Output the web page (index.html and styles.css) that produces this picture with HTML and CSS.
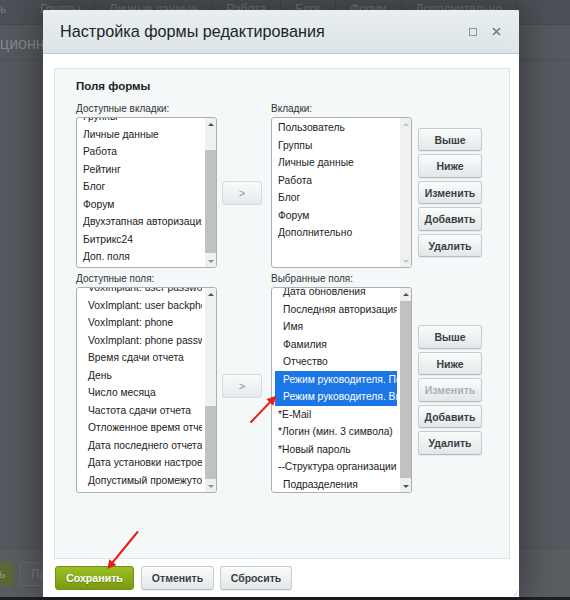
FILE: index.html
```html
<!DOCTYPE html>
<html lang="ru">
<head>
<meta charset="utf-8">
<title>Настройка формы редактирования</title>
<link rel="stylesheet" href="styles.css">
</head>
<body>
<div class="page">
  <div class="tabs">
    <span class="tab tab-first">ь</span>
    <span class="tab">Группы</span>
    <span class="tab">Личные данные</span>
    <span class="tab">Работа</span>
    <span class="tab">Блог</span>
    <span class="tab">Форум</span>
    <span class="tab">Дополнительно</span>
  </div>
  <div class="page-title">ционные данные</div>
  <div class="page-content"></div>
  <div class="page-footer">
    <span class="bg-btn bg-btn-green">ь</span>
    <span class="bg-btn bg-btn-gray">Применить</span>
  </div>
  <div class="page-bottom"></div>
</div>

<div class="dialog">
  <div class="dlg-head">
    <span class="dlg-title">Настройка формы редактирования</span>
    <span class="dlg-icons">
      <svg class="ico" width="8" height="8" viewBox="0 0 8 8"><rect x="0.5" y="0.5" width="7" height="7" fill="none" stroke="#8a96a0" stroke-width="1"/></svg>
      <svg class="ico" width="9" height="9" viewBox="0 0 9 9"><path d="M1 1L8 8M8 1L1 8" stroke="#6f7c86" stroke-width="1.6"/></svg>
    </span>
  </div>
  <div class="dlg-body">
    <div class="panel">
      <div class="panel-title">Поля формы</div>
      <div class="fields">
        <div class="lbl c1">Доступные вкладки:</div>
        <div class="lbl c3">Вкладки:</div>

        <div class="listbox lb-small c1">
          <div class="opts"><div class="opts-in off-1">
            <div class="opt">Группы</div>
            <div class="opt">Личные данные</div>
            <div class="opt">Работа</div>
            <div class="opt">Рейтинг</div>
            <div class="opt">Блог</div>
            <div class="opt">Форум</div>
            <div class="opt">Двухэтапная авторизация</div>
            <div class="opt">Битрикс24</div>
            <div class="opt">Доп. поля</div>
          </div></div>
          <div class="sb">
            <span class="sb-btn"><i class="ar-up"></i></span>
            <span class="sb-track"><span class="thumb th-1"></span></span>
            <span class="sb-btn"><i class="ar-down light"></i></span>
          </div>
        </div>
        <button class="move">&gt;</button>
        <div class="listbox lb-small">
          <div class="opts"><div class="opts-in off-2">
            <div class="opt">Пользователь</div>
            <div class="opt">Группы</div>
            <div class="opt">Личные данные</div>
            <div class="opt">Работа</div>
            <div class="opt">Блог</div>
            <div class="opt">Форум</div>
            <div class="opt">Дополнительно</div>
          </div></div>
          <div class="sb">
            <span class="sb-btn"><i class="ar-up faint"></i></span>
            <span class="sb-track"></span>
            <span class="sb-btn"><i class="ar-down faint"></i></span>
          </div>
        </div>
        <div class="side">
          <button class="btn">Выше</button>
          <button class="btn">Ниже</button>
          <button class="btn">Изменить</button>
          <button class="btn">Добавить</button>
          <button class="btn">Удалить</button>
        </div>

        <div class="lbl c1 lbl-second">Доступные поля:</div>
        <div class="lbl c3 lbl-second">Выбранные поля:</div>

        <div class="listbox lb-big c1">
          <div class="opts"><div class="opts-in off-3">
            <div class="opt sub">VoxImplant: user password</div>
            <div class="opt sub">VoxImplant: user backphone</div>
            <div class="opt sub">VoxImplant: phone</div>
            <div class="opt sub">VoxImplant: phone password</div>
            <div class="opt sub">Время сдачи отчета</div>
            <div class="opt sub">День</div>
            <div class="opt sub">Число месяца</div>
            <div class="opt sub">Частота сдачи отчета</div>
            <div class="opt sub">Отложенное время отчета</div>
            <div class="opt sub">Дата последнего отчета</div>
            <div class="opt sub">Дата установки настроек</div>
            <div class="opt sub">Допустимый промежуток</div>
          </div></div>
          <div class="sb">
            <span class="sb-btn"><i class="ar-up"></i></span>
            <span class="sb-track"><span class="thumb th-3"></span></span>
            <span class="sb-btn"><i class="ar-down light"></i></span>
          </div>
        </div>
        <button class="move move-low">&gt;</button>
        <div class="listbox lb-big">
          <div class="opts"><div class="opts-in off-4">
            <div class="opt sub">Дата обновления</div>
            <div class="opt sub">Последняя авторизация</div>
            <div class="opt sub">Имя</div>
            <div class="opt sub">Фамилия</div>
            <div class="opt sub">Отчество</div>
            <div class="opt sub sel">Режим руководителя. Подчинённые</div>
            <div class="opt sub sel">Режим руководителя. Видимость</div>
            <div class="opt">*E-Mail</div>
            <div class="opt">*Логин (мин. 3 символа)</div>
            <div class="opt">*Новый пароль</div>
            <div class="opt">--Структура организации</div>
            <div class="opt sub">Подразделения</div>
          </div></div>
          <div class="sb">
            <span class="sb-btn"><i class="ar-up"></i></span>
            <span class="sb-track"><span class="thumb th-4"></span></span>
            <span class="sb-btn"><i class="ar-down"></i></span>
          </div>
        </div>
        <div class="side">
          <button class="btn">Выше</button>
          <button class="btn">Ниже</button>
          <button class="btn" disabled>Изменить</button>
          <button class="btn">Добавить</button>
          <button class="btn">Удалить</button>
        </div>
      </div>
    </div>
  </div>
  <div class="dlg-foot">
    <button class="btn-save">Сохранить</button>
    <button class="btn btn-foot w-cancel">Отменить</button>
    <button class="btn btn-foot w-reset">Сбросить</button>
  </div>
  <svg class="grip" width="6" height="6" viewBox="0 0 6 6"><path d="M1 6L6 1M3.5 6L6 3.5" stroke="#c9d0d3" stroke-width="1"/></svg>
</div>

<svg class="annotations" width="570" height="600" viewBox="0 0 570 600">
  <line x1="251" y1="422" x2="270.5" y2="401.8" stroke="#e5201a" stroke-width="2" stroke-linecap="round"/>
  <polygon points="276.5,395.5 273.2,405.8 266.4,399.2" fill="#e5201a"/>
  <line x1="137.5" y1="532" x2="112.5" y2="562.5" stroke="#e5201a" stroke-width="2" stroke-linecap="round"/>
  <polygon points="107.5,569 116.4,565 109.2,559.2" fill="#e5201a"/>
</svg>
</body>
</html>
```

FILE: styles.css
```css
* { box-sizing: border-box; }
html, body { margin: 0; padding: 0; }
body {
  width: 570px;
  height: 600px;
  overflow: hidden;
  position: relative;
  background: #55585e;
  font-family: "Liberation Sans", Arial, sans-serif;
}

/* ---------- faded page behind the overlay ---------- */
.page { height: 600px; display: flex; flex-direction: column; }
.tabs {
  height: 25px;
  flex: none;
  display: flex;
  background: #4d5056;
  border-bottom: 1px solid #46494e;
  overflow: hidden;
}
.tab {
  padding: 2px 14px 0;
  font-size: 12px;
  line-height: 14px;
  color: #75787e;
  border-right: 1px solid #44474c;
  white-space: nowrap;
}
.tab-first { padding-left: 0; padding-right: 19px; }
.page-title {
  height: 35px;
  flex: none;
  padding-top: 10px;
  font-size: 16px;
  line-height: 18px;
  color: #84878c;
  white-space: nowrap;
  overflow: hidden;
  border-bottom: 1px solid #4e5156;
}
.page-content { flex: 1; }
.page-footer {
  height: 49px;
  flex: none;
  display: flex;
  align-items: flex-start;
  gap: 5px;
  padding-top: 13px;
  background: #595c61;
  border-top: 1px solid #505358;
}
.bg-btn {
  height: 24px;
  border-radius: 3px;
  font-size: 12px;
  font-weight: bold;
  line-height: 24px;
  white-space: nowrap;
}
.bg-btn-green {
  margin-left: -40px;
  width: 54px;
  padding-right: 8px;
  text-align: right;
  background: #5c6836;
  color: #858b73;
}
.bg-btn-gray {
  padding: 0 11px;
  background: #5b5e63;
  border: 1px solid #66696e;
  color: #6f7277;
  line-height: 22px;
}
.page-bottom { height: 3px; flex: none; background: #1e1f21; }

/* ---------- dialog ---------- */
.dialog {
  position: absolute;
  left: 43px;
  top: 10px;
  width: 476px;
  height: 587px;
  background: #fff;
  border-radius: 2px 2px 0 0;
  box-shadow: 0 0 32px 6px rgba(0, 0, 0, 0.33);
  display: flex;
  flex-direction: column;
}
.dlg-head {
  height: 44px;
  flex: none;
  display: flex;
  align-items: center;
  padding: 0 18px 0 17px;
  background: linear-gradient(#e9eef0, #dce5e8);
  border-bottom: 1px solid #bec8cc;
  border-radius: 2px 2px 0 0;
}
.dlg-title { font-size: 16.2px; color: #202427; white-space: nowrap; }
.dlg-icons { margin-left: auto; display: flex; align-items: center; gap: 15px; }
.ico { display: block; }

.dlg-body { flex: none; padding: 14px 9px 0 11px; }
.panel {
  height: 491px;
  border: 1px solid #dbe4e8;
  background: #f4f8f9;
  padding: 10px 0 0 21px;
}
.panel-title {
  font-size: 11.5px;
  font-weight: bold;
  line-height: 14px;
  color: #222;
  margin-bottom: 9px;
}
.fields {
  display: grid;
  grid-template-columns: 146px 49px 147px 64px;
}
.c1 { grid-column: 1; }
.c3 { grid-column: 3; }
.lbl {
  font-size: 10px;
  line-height: 13px;
  color: #333;
  margin-bottom: 2px;
  white-space: nowrap;
}
.lbl-second { margin-top: 4px; }

/* list boxes */
.listbox {
  width: 141px;
  display: flex;
  background: #fff;
  border: 1px solid #a9b1b5;
  border-radius: 3px;
  overflow: hidden;
}
.lb-small { height: 151px; }
.lb-big { height: 206px; }
.opts { flex: 1; min-width: 0; overflow: hidden; padding: 0 3px 0 3px; }
.off-1 { margin-top: -10px; }
.off-2 { margin-top: 1px; }
.off-3 { margin-top: -9px; }
.off-4 { margin-top: -5px; }
.opt {
  height: 17.5px;
  line-height: 17.5px;
  font-size: 10.3px;
  color: #222;
  padding-left: 3px;
  white-space: nowrap;
  overflow: hidden;
}
.opt.sub { padding-left: 8px; }
.opt.sel { background: #1c76e6; color: #fff; }

.sb {
  width: 11px;
  flex: none;
  display: flex;
  flex-direction: column;
  background: #f0f0f0;
}
.sb-btn {
  height: 12px;
  flex: none;
  display: flex;
  align-items: center;
  justify-content: center;
}
.sb-track { flex: 1; display: flex; flex-direction: column; }
.thumb { display: block; background: #c1c1c1; }
.th-1 { margin-top: 20px; height: 103px; }
.th-3 { margin-top: 106px; height: 73px; }
.th-4 { margin-top: 1px; height: 177px; }
.ar-up, .ar-down {
  display: block;
  width: 0;
  height: 0;
  border-left: 3px solid transparent;
  border-right: 3px solid transparent;
}
.ar-up { border-bottom: 3px solid #505050; }
.ar-down { border-top: 3px solid #505050; }
.ar-down.light { border-top-color: #8e8e8e; }
.ar-up.faint { border-bottom-color: #c4c4c4; }
.ar-down.faint { border-top-color: #c4c4c4; }

/* buttons */
.move {
  width: 40px;
  height: 24px;
  align-self: center;
  justify-self: start;
  padding: 0;
  border: 1px solid #d3dbde;
  border-radius: 3px;
  background: linear-gradient(#f9fbfb, #e4eaec);
  color: #8d979c;
  font-family: "Liberation Sans", Arial, sans-serif;
  font-size: 11px;
}
.move-low { margin-bottom: 8px; }
.side {
  display: flex;
  flex-direction: column;
  gap: 3px;
  align-self: center;
}
.btn {
  height: 23.5px;
  padding: 0;
  border: 1px solid #c5cdd1;
  border-bottom-color: #b3bdc1;
  border-radius: 3px;
  background: linear-gradient(#fbfcfc, #e1e7e9);
  box-shadow: 0 1px 1px rgba(0, 0, 0, 0.06);
  color: #3a3f44;
  font-family: "Liberation Sans", Arial, sans-serif;
  font-size: 10.5px;
  font-weight: bold;
}
.btn:disabled { color: #a9b1b5; }

.dlg-foot {
  flex: none;
  display: flex;
  gap: 6px;
  padding: 7px 0 0 12px;
}
.btn-save {
  width: 79px;
  height: 24px;
  margin-right: 1px;
  padding: 0;
  border: 1px solid #6e8f14;
  border-radius: 3px;
  background: linear-gradient(#9cbf24, #789a10);
  color: #fff;
  text-shadow: 0 1px 0 rgba(0, 0, 0, 0.25);
  font-family: "Liberation Sans", Arial, sans-serif;
  font-size: 10.6px;
  font-weight: bold;
}
.btn-foot { height: 24px; }
.w-cancel { width: 73px; }
.w-reset { width: 72px; }

.grip { position: absolute; right: 1px; bottom: 1px; }

.annotations { position: absolute; left: 0; top: 0; pointer-events: none; }
```
